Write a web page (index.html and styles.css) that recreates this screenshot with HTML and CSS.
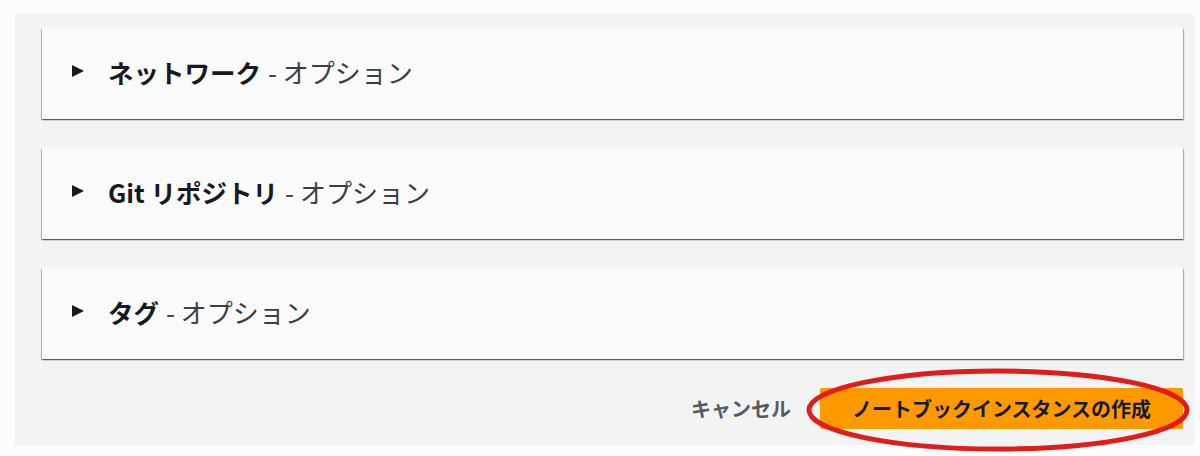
FILE: index.html
```html
<!DOCTYPE html>
<html lang="ja">
<head>
    <meta charset="UTF-8">
    <title>ノートブックインスタンスの作成</title>
    <link rel="stylesheet" href="styles.css">
</head>
<body>
    <div class="page">
        <div class="panel">
            <span class="caret"></span>
            <span class="title">ネットワーク</span>
            <span class="optional">- オプション</span>
        </div>
        <div class="panel">
            <span class="caret"></span>
            <span class="title">Git リポジトリ</span>
            <span class="optional">- オプション</span>
        </div>
        <div class="panel">
            <span class="caret"></span>
            <span class="title">タグ</span>
            <span class="optional">- オプション</span>
        </div>

        <div class="actions">
            <button class="cancel">キャンセル</button>
            <button class="primary">ノートブックインスタンスの作成</button>
        </div>
    </div>

    <!-- red marker round the create button -->
    <svg class="mark" width="400" height="90" viewBox="0 0 400 90">
        <ellipse cx="194" cy="44" rx="189" ry="39" fill="none" stroke="#e21b1b" stroke-width="5"/>
    </svg>
</body>
</html>
```

FILE: styles.css
```css
body {
    margin: 0;
    background: #fbfcfd;
    font-family: "Noto Sans CJK JP", "Noto Sans", sans-serif;
    color: #16191f;
}
.page {
    margin: 14px 6px 0 15px;
    height: 431px;
    background: #f2f3f3;
    padding: 14px 11px 0 27px;
    box-sizing: border-box;
}
.panel {
    height: 91px;
    margin-bottom: 29px;
    background: #fafafa;
    display: flex;
    align-items: center;
    padding-left: 30px;
    padding-bottom: 5px;
    box-sizing: border-box;
    box-shadow: 0 1px 1px 0 rgba(0, 28, 36, 0.45), 1px 1px 1px 0 rgba(0, 28, 36, 0.25), -1px 1px 1px 0 rgba(0, 28, 36, 0.2);
}
.caret {
    width: 0;
    height: 0;
    border-top: 6.5px solid transparent;
    border-bottom: 6.5px solid transparent;
    border-left: 12px solid #16191f;
    margin-right: 24px;
}
.title {
    font-size: 25.5px;
    font-weight: bold;
    margin-right: 7px;
}
.optional {
    font-size: 26px;
    color: #3a3f46;
}
.actions {
    display: flex;
    justify-content: flex-end;
    align-items: center;
    gap: 29px;
}
button {
    font-family: inherit;
    font-weight: bold;
    border: none;
    cursor: pointer;
}
.cancel {
    background: none;
    color: #545b64;
    font-size: 20px;
    padding: 0;
}
.primary {
    width: 363px;
    height: 41px;
    background: #ff9900;
    color: #16191f;
    font-size: 20px;
    border-radius: 2px;
    padding: 0;
}
.mark {
    position: absolute;
    left: 804px;
    top: 366px;
}
```
